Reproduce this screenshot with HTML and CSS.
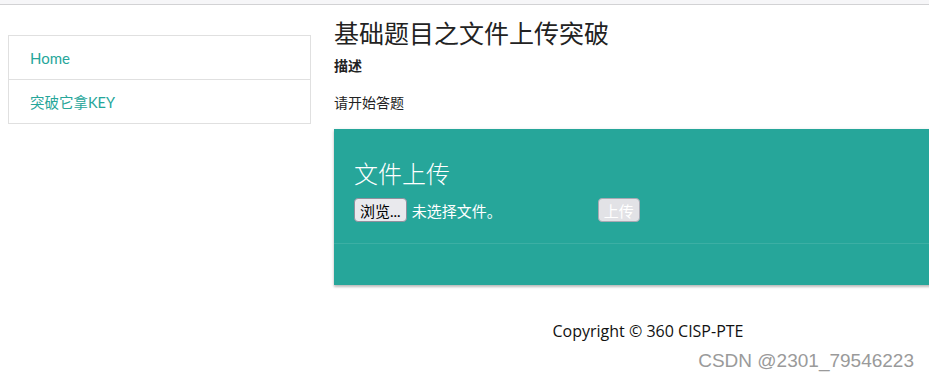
FILE: index.html
```html
<!DOCTYPE html>
<html lang="zh-CN">
<head>
  <meta charset="UTF-8">
  <title>基础题目之文件上传突破</title>
  <link rel="stylesheet" href="styles.css">
</head>
<body>
  <div class="topbar"></div>

  <div class="page">
    <div class="sidebar">
      <a class="side-item side-home" href="#">Home</a>
      <a class="side-item" href="#">突破它拿KEY</a>
    </div>

    <div class="main">
      <h3 class="title">基础题目之文件上传突破</h3>
      <div class="desc-label">描述</div>
      <p class="desc">请开始答题</p>

      <div class="card">
        <div class="card-content">
          <div class="card-title">文件上传</div>
          <form class="upload-form">
            <span class="file-btn">浏览...</span>
            <span class="file-name">未选择文件。</span>
            <span class="submit-btn">上传</span>
          </form>
        </div>
        <div class="card-action"></div>
      </div>

      <div class="footer">Copyright © 360 CISP-PTE</div>
    </div>
  </div>

  <div class="watermark">CSDN @2301_79546223</div>
</body>
</html>
```

FILE: styles.css
```css
:root {
  --teal: #26a69a;
  --text-color: #222;
}

body {
  margin: 0;
  color: var(--text-color);
  font-family: Lato, "Noto Sans CJK SC", sans-serif;
  font-size: 14px;
  overflow: hidden;
  width: 929px;
  height: 380px;
  position: relative;
}

.topbar {
  height: 4px;
  background: #f6f6f8;
  border-bottom: 1px solid #d2d2d4;
}

.page {
  display: grid;
  grid-template-columns: 303px 628px;
  column-gap: 23px;
  padding-left: 8px;
}

/* sidebar */
.sidebar {
  margin-top: 30px;
  align-self: start;
  border: 1px solid #e0e0e0;
  display: flex;
  flex-direction: column;
}

.side-item {
  height: 43px;
  display: flex;
  align-items: center;
  padding-left: 21px;
  color: var(--teal);
  text-decoration: none;
  font-size: 14.5px;
}

.side-home {
  font-size: 15px;
  border-bottom: 1px solid #e0e0e0;
}

/* main */
.title {
  margin: 12px 0 0;
  font-size: 25px;
  font-weight: 400;
  line-height: 32px;
}

.desc-label {
  margin-top: 7px;
  font-weight: bold;
  font-size: 14px;
  line-height: 20px;
}

.desc {
  margin: 17px 0 0;
  font-size: 14px;
  line-height: 20px;
}

.card {
  margin-top: 16px;
  background: var(--teal);
  box-shadow: 0 2px 2px rgba(0, 0, 0, 0.2), 0 1px 4px rgba(0, 0, 0, 0.12);
  color: #fff;
}

.card-content {
  padding: 28px 20px 21px;
  border-bottom: 1px solid rgba(255, 255, 255, 0.1);
}

.card-title {
  font-size: 24px;
  line-height: 34px;
  font-weight: 300;
}

.upload-form {
  display: flex;
  align-items: center;
  margin-top: 7px;
}

.file-btn,
.submit-btn {
  box-sizing: border-box;
  height: 24px;
  display: inline-flex;
  align-items: center;
  padding: 0 5px;
  border: 1px solid #8f8f9d;
  border-radius: 4px;
  background: #e9e9ed;
  font-size: 15px;
}

.file-btn {
  color: #000;
}

.file-name {
  margin-left: 5px;
  width: 186px;
  font-size: 15px;
}

.submit-btn {
  color: #fff;
  background: #e2e2e6;
  border-color: #a9a9b4;
}

.card-action {
  height: 41px;
}

.footer {
  margin-top: 35px;
  text-align: center;
  font-family: "Open Sans", "Noto Sans CJK SC", sans-serif;
  font-size: 16px;
  color: #111;
}

.watermark {
  position: absolute;
  right: 15px;
  bottom: 8px;
  font-family: "Liberation Sans", Arial, sans-serif;
  font-size: 19px;
  color: #9a9a9a;
}
```
